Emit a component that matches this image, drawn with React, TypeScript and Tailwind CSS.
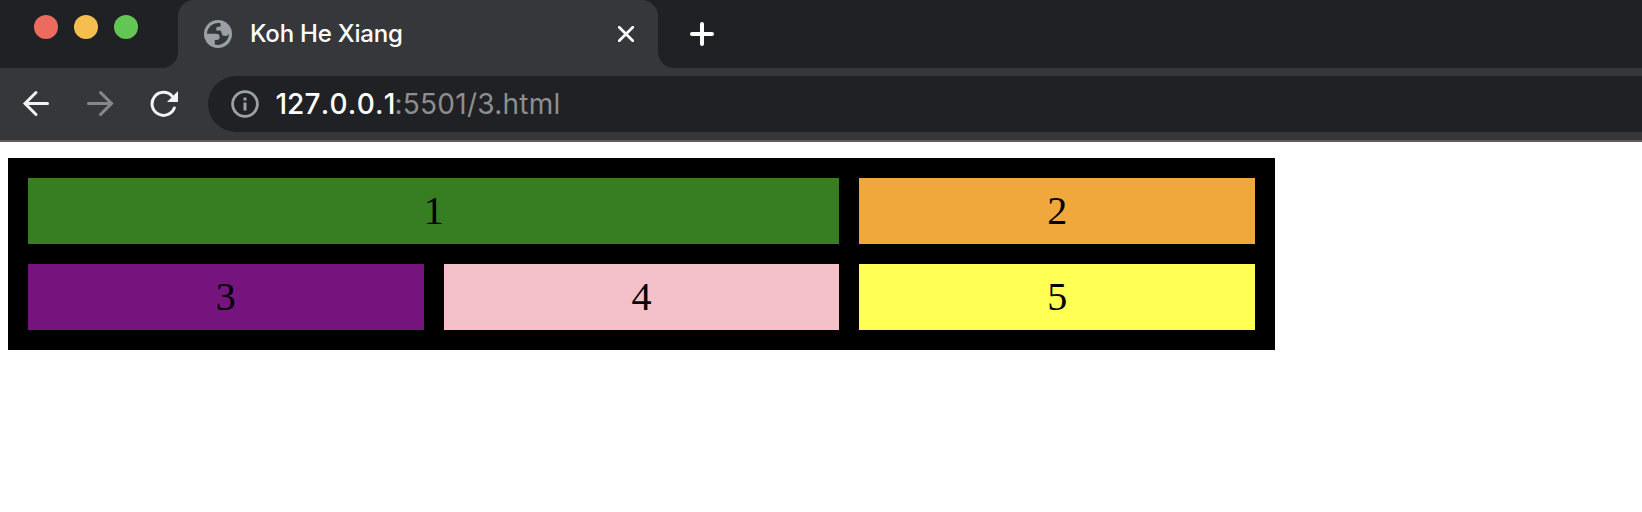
import React from "react";

const chromeFont = "font-['Inter',sans-serif]";

function WindowControls() {
  return (
    <div className="flex w-[178px] shrink-0 gap-4 pl-[34px] pt-[15px]">
      <span className="size-6 rounded-full bg-[#ed6a5f]" />
      <span className="size-6 rounded-full bg-[#f5bf50]" />
      <span className="size-6 rounded-full bg-[#62c655]" />
    </div>
  );
}

function GlobeIcon() {
  return (
    <svg className="size-7 shrink-0" viewBox="0 0 28 28">
      <circle cx="14" cy="14" r="14" fill="#9aa0a6" />
      <path
        d="M16.500 3.200C9.500 2 3.200 7 3 13.800h8.500c2.700 0 4.200 1 4.200 3.200 0 2-1.200 2.900-3 2.900h-1.900v4.700c7.200 1.600 14-3.400 14.200-10.800-.9 1.500-2.100 2.200-3.800 2.200-2.500 0-3.600-1.300-3.700-3.600-.1-1.400-.8-1.900-2.200-1.900h-3V8.600c0-1.300.7-1.900 2-1.900h1.200c.8 0 1.200-.5 1.200-1.300z"
        fill="#36373b"
      />
    </svg>
  );
}

function TabStrip() {
  return (
    <div className="flex h-[68px] bg-[#202124]">
      <WindowControls />
      <div className="relative flex w-[480px] shrink-0 items-center rounded-t-2xl bg-[#36373b] pl-[26px] pr-6">
        <svg className="absolute -left-4 bottom-0 size-4" viewBox="0 0 16 16">
          <path d="M16 0v16H0A16 16 0 0 0 16 0z" fill="#36373b" />
        </svg>
        <svg className="absolute -right-4 bottom-0 size-4" viewBox="0 0 16 16">
          <path d="M0 0v16h16A16 16 0 0 1 0 0z" fill="#36373b" />
        </svg>
        <GlobeIcon />
        <span className="ml-[18px] flex-1 whitespace-nowrap text-[24px] font-medium leading-7 tracking-[-0.2px] text-white">
          Koh He Xiang
        </span>
        <svg className="size-4" viewBox="0 0 16 16">
          <path d="M1.200 1.200l13.600 13.600M14.800 1.200L1.200 14.800" stroke="#fff" strokeWidth="2.700" strokeLinecap="round" />
        </svg>
      </div>
      <svg className="ml-8 mt-[22px] size-6" viewBox="0 0 24 24">
        <path d="M2 12h20M12 2v20" stroke="#fff" strokeWidth="4" strokeLinecap="round" />
      </svg>
    </div>
  );
}

function Toolbar() {
  return (
    <div className="flex h-[74px] items-center border-b-2 border-[#5f5c61] bg-[#36373b] pl-[22px]">
      <svg className="h-7 w-7 shrink-0" viewBox="0 0 28 28" fill="none" stroke="#f1f3f4" strokeWidth="3" strokeLinecap="round">
        <path d="M14 2.500L3 13.500l11 11M3.500 13.500h22" />
      </svg>
      <svg className="ml-9 h-7 w-7 shrink-0" viewBox="0 0 28 28" fill="none" stroke="#86878a" strokeWidth="3" strokeLinecap="round">
        <path d="M14.500 2.500l11 11-11 11M25 13.500H2.500" />
      </svg>
      <svg className="ml-9 h-7 w-7 shrink-0" viewBox="0 0 28 28">
        <path d="M24.300 18A11.500 11.500 0 1 1 22 6" fill="none" stroke="#f1f3f4" strokeWidth="3" strokeLinecap="round" />
        <path d="M28 1v11H17z" fill="#f1f3f4" />
      </svg>
      <div className="ml-[30px] flex h-14 flex-1 items-center rounded-l-full bg-[#202124] pl-[22.500px]">
        <svg className="size-7 shrink-0" viewBox="0 0 28 28">
          <circle cx="14" cy="14" r="12.400" fill="none" stroke="#9aa0a6" strokeWidth="2.800" />
          <path d="M12.500 7.500h3v3h-3zM12.500 12.500h3v8h-3z" fill="#9aa0a6" />
        </svg>
        <span className="ml-[17px] w-[119px] whitespace-nowrap text-[28px] font-medium leading-8 text-white">
          127<span className="mx-[0.3px]">.</span>0<span className="mx-[0.3px]">.</span>0<span className="mx-[0.3px]">.</span>1
        </span>
        <span className="whitespace-nowrap text-[28px] leading-8 tracking-[0.250px] text-[#8d8e90]">:5501/3.html</span>
      </div>
    </div>
  );
}

const cells = [
  { label: "1", className: "col-span-2 bg-[#377e22]" },
  { label: "2", className: "bg-[#f0a83c]" },
  { label: "3", className: "bg-[#75147c]" },
  { label: "4", className: "bg-[#f4c0ca]" },
  { label: "5", className: "bg-[#ffff54]" },
];

function Page() {
  return (
    <main className="flex-1 bg-white pl-2 pt-4 font-['Liberation_Serif',serif]">
      <div className="grid w-[1267px] grid-cols-3 gap-5 bg-black p-5">
        {cells.map((cell) => (
          <div key={cell.label} className={`h-[66px] py-2.5 text-center text-[40px] leading-[46px] text-black ${cell.className}`}>
            {cell.label}
          </div>
        ))}
      </div>
    </main>
  );
}

export default function App() {
  return (
    <div className="flex h-[512px] w-[1642px] flex-col overflow-hidden bg-white">
      <header className={chromeFont}>
        <TabStrip />
        <Toolbar />
      </header>
      <Page />
    </div>
  );
}
